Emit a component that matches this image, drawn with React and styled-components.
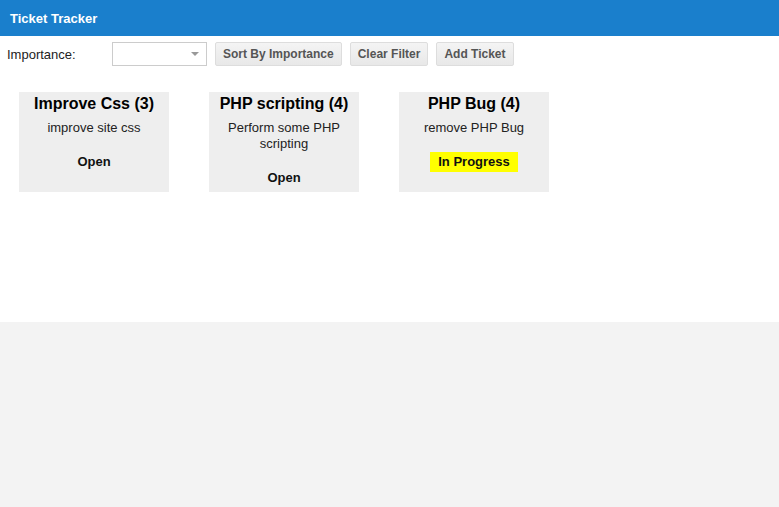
import React from 'react'
import styled, { createGlobalStyle } from 'styled-components'

const GlobalStyle = createGlobalStyle`
html, body {
  margin: 0;
  padding: 0;
  background: #f3f3f3;
  font-family: "Liberation Sans", Arial, sans-serif;
}
`

const Header = styled.div`
height: 36px;
background: #1a7fcc;
color: #fff;
font-weight: bold;
font-size: 13px;
display: flex;
align-items: center;
padding-left: 10px;
`

const Main = styled.div`
background: #fff;
height: 286px;
`

const Toolbar = styled.div`
display: flex;
align-items: center;
height: 24px;
padding: 6px 0 0 7px;
`

const Label = styled.span`
font-size: 13px;
color: #222;
width: 105px;
`

const Select = styled.div`
box-sizing: border-box;
width: 95px;
height: 24px;
border: 1px solid #ccc;
background: #fff;
display: flex;
align-items: center;
justify-content: flex-end;
padding-right: 7px;
margin-right: 8px;
`

const Arrow = styled.span`
width: 0;
height: 0;
border-left: 4px solid transparent;
border-right: 4px solid transparent;
border-top: 4px solid #999;
`

const Button = styled.button`
box-sizing: border-box;
height: 24px;
padding: 0 7px;
margin-right: 8px;
border: 1px solid #ddd;
border-radius: 2px;
background: linear-gradient(#f4f4f4, #e8e8e8);
color: #555;
font-family: "Liberation Sans", Arial, sans-serif;
font-weight: bold;
font-size: 12px;
`

const Cards = styled.div`
display: flex;
gap: 40px;
padding: 26px 0 0 19px;
`

const Card = styled.div`
box-sizing: border-box;
width: 150px;
height: 100px;
background: #eee;
text-align: center;
padding-top: 2px;
display: flex;
flex-direction: column;
align-items: center;
`

const Title = styled.div`
font-weight: bold;
font-size: 16px;
line-height: 20px;
color: #000;
`

const Desc = styled.div`
font-size: 13px;
line-height: 16px;
color: #222;
margin-top: 6px;
padding: 0 10px;
`

const Status = styled.div`
margin-top: 16px;
font-weight: bold;
font-size: 13px;
line-height: 20px;
padding: 0 8px;
color: #111;
background: ${p => (p.$progress ? '#ffff00' : 'transparent')};
`

const tickets = [
  { title: 'Improve Css (3)', desc: 'improve site css', status: 'Open' },
  { title: 'PHP scripting (4)', desc: 'Perform some PHP scripting', status: 'Open' },
  { title: 'PHP Bug (4)', desc: 'remove PHP Bug', status: 'In Progress' },
]

export default function App() {
  return (
    <>
      <GlobalStyle />
      <Header>Ticket Tracker</Header>
      <Main>
        <Toolbar>
          <Label>Importance:</Label>
          <Select><Arrow /></Select>
          <Button>Sort By Importance</Button>
          <Button>Clear Filter</Button>
          <Button>Add Ticket</Button>
        </Toolbar>
        <Cards>
          {tickets.map(t => (
            <Card key={t.title}>
              <Title>{t.title}</Title>
              <Desc>{t.desc}</Desc>
              <Status $progress={t.status === 'In Progress'}>{t.status}</Status>
            </Card>
          ))}
        </Cards>
      </Main>
    </>
  )
}
